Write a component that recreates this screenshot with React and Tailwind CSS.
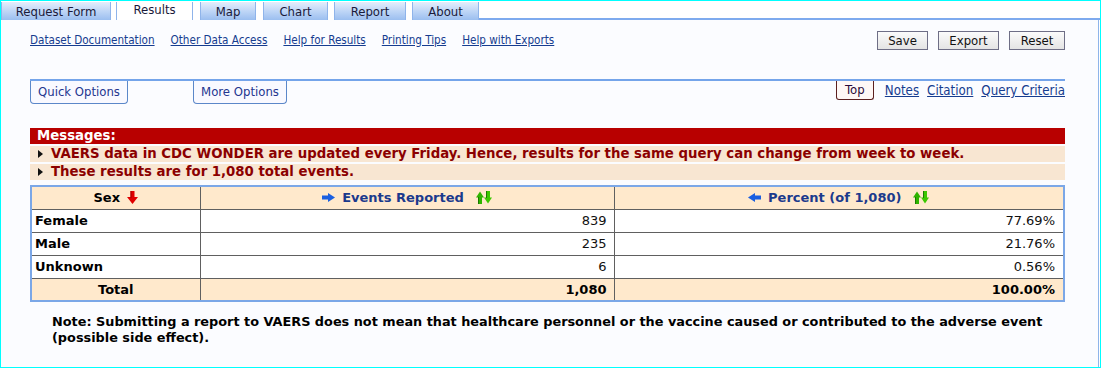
import React from "react";

const tah = "font-['DejaVu_Sans_Condensed','Liberation_Sans',sans-serif]";
const ver = "font-['DejaVu_Sans',Verdana,sans-serif]";

function RedDown() {
  return (
    <svg width="11" height="13" viewBox="0 0 11 13" className="inline-block">
      <rect x="3.5" y="0" width="4" height="7" fill="#e00000" />
      <polygon points="0,6 11,6 5.5,13" fill="#e00000" />
      <rect x="3.5" y="0" width="1" height="7" fill="#a00000" />
    </svg>
  );
}

function GreenUp() {
  return (
    <svg width="8" height="13" viewBox="0 0 8 13" className="inline-block">
      <polygon points="0,6.5 4,0.5 8,6.5" fill="#2fb400" />
      <rect x="2" y="6" width="4" height="7" fill="#2fb400" />
      <rect x="2" y="6" width="1" height="7" fill="#1c7a00" />
    </svg>
  );
}

function GreenDown() {
  return (
    <svg width="8" height="13" viewBox="0 0 8 13" className="inline-block">
      <rect x="2" y="0" width="4" height="7" fill="#3cc800" />
      <polygon points="0,6.5 8,6.5 4,12.5" fill="#3cc800" />
      <rect x="2" y="0" width="1" height="7" fill="#1c7a00" />
    </svg>
  );
}

function BlueArrow({ left }) {
  return (
    <svg width="13" height="9" viewBox="0 0 13 9" className="inline-block" style={left ? { transform: "scaleX(-1)" } : undefined}>
      <rect x="0" y="2.5" width="7" height="4" fill="#1a5fe0" />
      <polygon points="6,0 13,4.5 6,9" fill="#1a5fe0" />
    </svg>
  );
}

function Bullet() {
  return (
    <svg width="5" height="8" viewBox="0 0 5 8" className="inline-block shrink-0">
      <polygon points="0,0 5,4 0,8" fill="#111" />
    </svg>
  );
}

const tabs = ["Request Form", "Results", "Map", "Chart", "Report", "About"];
const tabWidths = ["w-[110px]", "w-[77px]", "w-[56px]", "w-[65px]", "w-[72px]", "w-[67px]"];
const tabGaps = ["mr-[5px]", "mr-[7px]", "mr-[7px]", "mr-[6px]", "mr-[6px]", "mr-0"];

const links = ["Dataset Documentation", "Other Data Access", "Help for Results", "Printing Tips", "Help with Exports"];

const buttons = [
  { label: "Save", w: "w-[51px]" },
  { label: "Export", w: "w-[61px]" },
  { label: "Reset", w: "w-[56px]" },
];

const rows = [
  { sex: "Female", n: "839", pct: "77.69%" },
  { sex: "Male", n: "235", pct: "21.76%" },
  { sex: "Unknown", n: "6", pct: "0.56%" },
];

export default function App() {
  return (
    <div className="w-[1101px] h-[369px] bg-white">
      <div className="h-[368px] border border-[#00ffff] flex flex-col">
        {/* tab strip */}
        <div className="flex items-end pt-px">
          {tabs.map((t, i) =>
            t === "Results" ? (
              <div key={t} className={`${tabWidths[i]} ${tabGaps[i]} h-[18px] pb-[2px] bg-white border-x border-[#8fb4ea] flex items-center justify-center text-[13px] text-[#1a1a3a] ${tah}`}>
                {t}
              </div>
            ) : (
              <div key={t} className={`${tabWidths[i]} ${tabGaps[i]} h-[18px] flex flex-col`}>
                <div className={`flex-1 bg-gradient-to-b from-[#e4eefc] to-[#93b9ee] border-x border-[#8fb4ea] flex items-center justify-center text-[13px] text-[#1a1a3a] ${tah}`}>
                  {t}
                </div>
                <div className="h-[2px] bg-[#7eaaee]" />
              </div>
            )
          )}
          <div className="flex-1 h-[2px] bg-[#7eaaee]" />
        </div>

        {/* panel */}
        <div className="flex-1 bg-[#fbfcff] border-r border-[#8fb4ea] mr-px pl-[29px] pr-[33px]">
          <div className="flex items-center justify-between pt-[11px] h-[30px]">
            <div className="flex gap-[16px]">
              {links.map((l) => (
                <a key={l} href="#" className={`text-[11.6px] text-[#163c8f] underline ${tah}`}>{l}</a>
              ))}
            </div>
            <div className="flex gap-[10px]">
              {buttons.map((b) => (
                <button key={b.label} className={`${b.w} h-[19px] bg-gradient-to-b from-[#fbfbfb] to-[#e4e4e4] border border-[#6e6e86] text-[13px] leading-none text-[#111] ${tah}`}>
                  {b.label}
                </button>
              ))}
            </div>
          </div>

          {/* options row */}
          <div className="mt-[29px] border-t-2 border-[#74a4ea] flex justify-between">
            <div className="flex items-start gap-[65px]">
              <div className={`w-[98px] h-[23px] border border-t-0 border-[#5b87c9] rounded-b-[4px] bg-[#f9f9ff] flex items-center justify-center text-[13px] text-[#24358f] ${tah}`}>
                Quick Options
              </div>
              <div className={`w-[94px] h-[23px] border border-t-0 border-[#5b87c9] rounded-b-[4px] bg-[#f9f9ff] flex items-center justify-center text-[13px] text-[#24358f] ${tah}`}>
                More Options
              </div>
            </div>
            <div className={`flex items-start text-[13.2px] ${tah}`}>
              <div className="w-[38px] h-[19px] border border-t-0 border-[#5c2020] rounded-b-[3px] bg-[#fff8f6] flex items-center justify-center text-[13px] text-[#2a0a3a] mr-[11px]">
                Top
              </div>
              <a href="#" className="text-[#163c8f] underline leading-[20px] mr-[8px]">Notes</a>
              <a href="#" className="text-[#163c8f] underline leading-[20px] mr-[8px]">Citation</a>
              <a href="#" className="text-[#163c8f] underline leading-[20px]">Query Criteria</a>
            </div>
          </div>

          {/* messages */}
          <div className={`mt-[24px] ${ver} text-[13.3px] font-bold`}>
            <div className="h-[16px] bg-[#b80000] text-white leading-[16px] pl-[7px]">Messages:</div>
            <div className="mt-[2px] h-[16px] bg-[#f8e6d2] text-[#8b0000] leading-[16px] pl-[8px] flex items-center gap-[8px]">
              <Bullet />
              <span>VAERS data in CDC WONDER are updated every Friday. Hence, results for the same query can change from week to week.</span>
            </div>
            <div className="mt-[2px] h-[16px] bg-[#f8e6d2] text-[#8b0000] leading-[16px] pl-[8px] flex items-center gap-[8px]">
              <Bullet />
              <span>These results are for 1,080 total events.</span>
            </div>
          </div>

          {/* table */}
          <table className={`mt-[5px] w-full border-collapse border-2 border-[#7ba7e7] ${ver} text-[13px]`}>
            <thead>
              <tr className="h-[23px] bg-[#ffe9cc]">
                <th className="w-[169px] border border-[#606060] font-bold text-black">
                  <span className="inline-flex items-center gap-[7px]">Sex <RedDown /></span>
                </th>
                <th className="w-[414px] border border-[#606060] font-bold text-[#1b3a8c]">
                  <span className="inline-flex items-center gap-[7px]">
                    <BlueArrow /> Events Reported
                    <span className="inline-flex ml-[5px]"><GreenUp /><GreenDown /></span>
                  </span>
                </th>
                <th className="border border-[#606060] font-bold text-[#1b3a8c]">
                  <span className="inline-flex items-center gap-[7px]">
                    <BlueArrow left /> Percent (of 1,080)
                    <span className="inline-flex ml-[5px]"><GreenUp /><GreenDown /></span>
                  </span>
                </th>
              </tr>
            </thead>
            <tbody>
              {rows.map((r) => (
                <tr key={r.sex} className="h-[23px] bg-white">
                  <td className="border border-[#606060] font-bold text-black pl-[3px]">{r.sex}</td>
                  <td className="border border-[#606060] text-[#111] text-right pr-[7px]">{r.n}</td>
                  <td className="border border-[#606060] text-[#111] text-right pr-[8px]">{r.pct}</td>
                </tr>
              ))}
              <tr className="h-[23px] bg-[#ffe9cc] font-bold text-black">
                <td className="border border-[#606060] text-center">Total</td>
                <td className="border border-[#606060] text-right pr-[7px]">1,080</td>
                <td className="border border-[#606060] text-right pr-[8px]">100.00%</td>
              </tr>
            </tbody>
          </table>

          <p className={`mt-[12px] ml-[22px] ${ver} text-[12.85px] font-bold leading-[16px] text-black`}>
            Note: Submitting a report to VAERS does not mean that healthcare personnel or the vaccine caused or contributed to the adverse event (possible side effect).
          </p>
        </div>
      </div>
    </div>
  );
}
